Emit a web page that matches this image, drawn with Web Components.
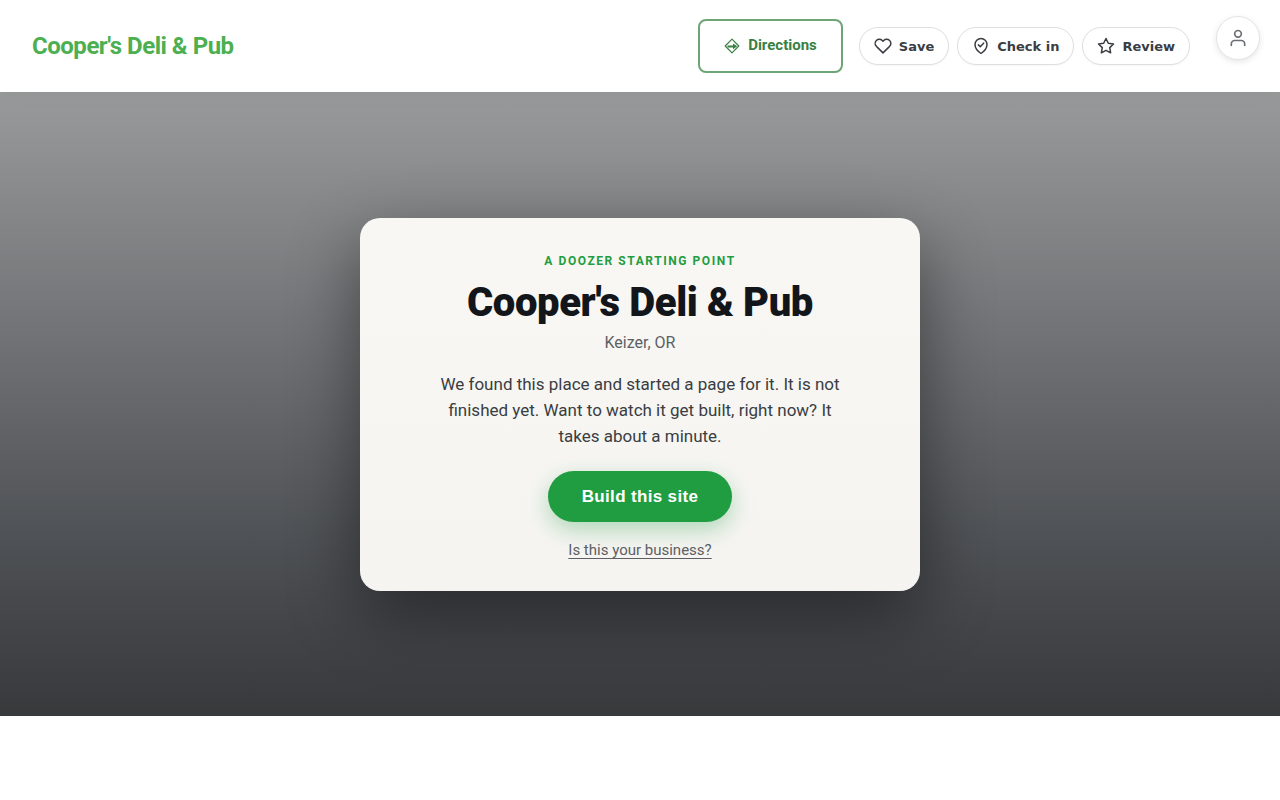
<!DOCTYPE html>
<html lang="en">
<head>
<meta charset="utf-8">
<meta name="viewport" content="width=device-width, initial-scale=1">
<title>Cooper's Deli &amp; Pub</title>
<style>
  body {
    margin: 0;
    background: #fff;
    color: #3a3d42;
    font-family: Roboto, "Liberation Sans", sans-serif;
    font-size: 16px;
  }
</style>
</head>
<body>
<site-header>
  <a slot="brand" href="#top">Cooper's Deli &amp; Pub</a>
  <directions-link>Directions</directions-link>
  <action-group>
    <action-pill icon="heart">Save</action-pill>
    <action-pill icon="pin">Check in</action-pill>
    <action-pill icon="star">Review</action-pill>
  </action-group>
</site-header>
<account-button></account-button>
<main>
  <hero-section>
    <starter-card>
      <span slot="eyebrow">A Doozer starting point</span>
      <span slot="name">Cooper's Deli &amp; Pub</span>
      <span slot="place">Keizer, OR</span>
      We found this place and started a page for it. It is not finished yet. Want to watch it get built, right now? It takes about a minute.
      <span slot="action">Build this site</span>
      <span slot="claim">Is this your business?</span>
    </starter-card>
  </hero-section>
</main>

<script>
const icons = {
  heart: '<path d="M20.8 4.6a5.5 5.5 0 0 0-7.8 0L12 5.7l-1-1.1a5.5 5.5 0 0 0-7.8 7.8l1 1.1L12 21.2l7.8-7.7 1-1.1a5.5 5.5 0 0 0 0-7.8z"/>',
  pin: '<path d="M12 22s8-5.5 8-12a8 8 0 0 0-16 0c0 6.5 8 12 8 12z"/><path d="M8.5 10.5l2.5 2.5 4.5-4.8"/>',
  star: '<path d="M12 2l3.1 6.3 6.9 1-5 4.9 1.2 6.9L12 17.8l-6.2 3.3L7 14.2 2 9.3l6.9-1z"/>',
};

class SiteHeader extends HTMLElement {
  constructor() {
    super();
    this.attachShadow({ mode: 'open' }).innerHTML = `
      <style>
        :host {
          display: block;
          position: relative;
          z-index: 1;
          background: #fff;
          box-shadow: 0 2px 20px rgba(0, 0, 0, 0.05);
        }
        header {
          display: flex;
          align-items: center;
          justify-content: space-between;
          min-height: 92px;
          box-sizing: border-box;
          padding: 16px 90px 16px 32px;
        }
        nav { display: flex; align-items: center; gap: 16px; }
        ::slotted(a) {
          color: #4caf50;
          font-size: 24px;
          font-weight: 700;
          line-height: 32px;
          letter-spacing: -0.02em;
          text-decoration: none;
        }
      </style>
      <header>
        <slot name="brand"></slot>
        <nav aria-label="Place actions"><slot></slot></nav>
      </header>
    `;
  }
}

class DirectionsLink extends HTMLElement {
  constructor() {
    super();
    this.attachShadow({ mode: 'open' }).innerHTML = `
      <style>
        :host { display: block; }
        a {
          display: block;
          padding: 12px 24px 14px;
          border: 2px solid #6ea577;
          border-radius: 8px;
          color: #388043;
          font-size: 15px;
          font-weight: 700;
          line-height: 24px;
          white-space: nowrap;
          text-decoration: none;
        }
        svg { width: 16px; height: 16px; margin-right: 8px; vertical-align: -4px; }
      </style>
      <a href="#directions"><svg viewBox="0 0 16 16" fill="none" stroke="currentColor" aria-hidden="true">
        <path d="M8 1.2 14.8 8 8 14.8 1.2 8z" stroke-width="1.2" stroke-linejoin="round"/>
        <path d="M3.5 7.4H9V5.4l4.2 2.9L9 11.2V9.6H3.5z" fill="currentColor" stroke="none"/>
      </svg><slot></slot></a>
    `;
  }
}

class ActionGroup extends HTMLElement {
  constructor() {
    super();
    this.attachShadow({ mode: 'open' }).innerHTML = `
      <style>
        :host { display: flex; gap: 8px; }
      </style>
      <slot></slot>
    `;
  }
}

class ActionPill extends HTMLElement {
  constructor() {
    super();
    this.attachShadow({ mode: 'open' });
  }

  connectedCallback() {
    this.shadowRoot.innerHTML = `
      <style>
        :host { display: block; }
        button {
          display: flex;
          align-items: center;
          gap: 7px;
          height: 38px;
          padding: 0 14px;
          border: 1px solid #dedfe1;
          border-radius: 19px;
          background: #fff;
          box-shadow: 0 1px 2px rgba(0, 0, 0, 0.04);
          color: #3a3d42;
          font: 600 13px/17px "DejaVu Sans", sans-serif;
          cursor: pointer;
        }
        svg { width: 18px; height: 18px; }
      </style>
      <button type="button">
        <svg viewBox="0 0 24 24" fill="none" stroke="currentColor" stroke-width="2" stroke-linecap="round" stroke-linejoin="round" aria-hidden="true">${icons[this.getAttribute('icon')]}</svg>
        <slot></slot>
      </button>
    `;
  }
}

// Floats over the header and stays put on scroll
class AccountButton extends HTMLElement {
  constructor() {
    super();
    this.attachShadow({ mode: 'open' }).innerHTML = `
      <style>
        :host { position: fixed; top: 16px; right: 20px; z-index: 10; }
        button {
          display: grid;
          place-items: center;
          width: 44px;
          height: 44px;
          padding: 0;
          border: 1px solid #e2e3e5;
          border-radius: 50%;
          background: #fff;
          box-shadow: 0 2px 6px rgba(0, 0, 0, 0.1);
          color: #6b6e73;
          cursor: pointer;
        }
        svg { width: 20px; height: 20px; }
      </style>
      <button type="button" aria-label="Account">
        <svg viewBox="0 0 24 24" fill="none" stroke="currentColor" stroke-width="2" stroke-linecap="round" stroke-linejoin="round" aria-hidden="true">
          <path d="M20 21v-2a4 4 0 0 0-4-4H8a4 4 0 0 0-4 4v2"/>
          <circle cx="12" cy="7" r="4"/>
        </svg>
      </button>
    `;
  }
}

class HeroSection extends HTMLElement {
  constructor() {
    super();
    this.attachShadow({ mode: 'open' }).innerHTML = `
      <style>
        :host {
          display: flex;
          align-items: center;
          justify-content: center;
          min-height: 78vh;
          box-sizing: border-box;
          padding: 48px 24px;
          overflow: hidden;
          background: linear-gradient(180deg, #999a9b 0%, #4e5155 72%, #37393b 100%);
        }
      </style>
      <slot></slot>
    `;
  }
}

class StarterCard extends HTMLElement {
  constructor() {
    super();
    this.attachShadow({ mode: 'open' }).innerHTML = `
      <style>
        :host {
          display: block;
          width: 100%;
          max-width: 560px;
          box-sizing: border-box;
          padding: 35px 40px 29px;
          border-radius: 20px;
          background: linear-gradient(180deg, #f8f7f4, #f5f4f1);
          box-shadow: 0 24px 70px rgba(0, 0, 0, 0.45);
          text-align: center;
        }
        p, h1 { margin: 0; }
        .eyebrow {
          color: #1f9d3f;
          font-size: 12px;
          font-weight: 700;
          line-height: 16px;
          letter-spacing: 0.13em;
          text-transform: uppercase;
        }
        h1 {
          margin-top: 12px;
          color: #121519;
          font-size: 40px;
          font-weight: 900;
          line-height: 44px;
          letter-spacing: -0.01em;
        }
        .place { margin-top: 5px; color: #5c5f64; line-height: 26px; }
        .intro {
          max-width: 420px;
          margin: 15px auto 0;
          font-size: 17px;
          line-height: 26px;
        }
        button {
          display: block;
          height: 51px;
          margin: 22px auto 0;
          padding: 0 34px;
          border: 0;
          border-radius: 26px;
          background: #209d40;
          box-shadow: 0 8px 22px rgba(32, 157, 64, 0.32);
          color: #fff;
          font: 700 17px/21px "Liberation Sans", Arial, sans-serif;
          letter-spacing: 0.02em;
          cursor: pointer;
        }
        a {
          display: inline-block;
          margin-top: 16px;
          color: #5c5f64;
          font-size: 15px;
          line-height: 24px;
          text-underline-offset: 3px;
          text-decoration-skip-ink: none;
        }
      </style>
      <p class="eyebrow"><slot name="eyebrow"></slot></p>
      <h1><slot name="name"></slot></h1>
      <p class="place"><slot name="place"></slot></p>
      <p class="intro"><slot></slot></p>
      <button type="button"><slot name="action"></slot></button>
      <a href="#claim"><slot name="claim"></slot></a>
    `;
  }
}

customElements.define('site-header', SiteHeader);
customElements.define('directions-link', DirectionsLink);
customElements.define('action-group', ActionGroup);
customElements.define('action-pill', ActionPill);
customElements.define('account-button', AccountButton);
customElements.define('hero-section', HeroSection);
customElements.define('starter-card', StarterCard);
</script>
</body>
</html>
